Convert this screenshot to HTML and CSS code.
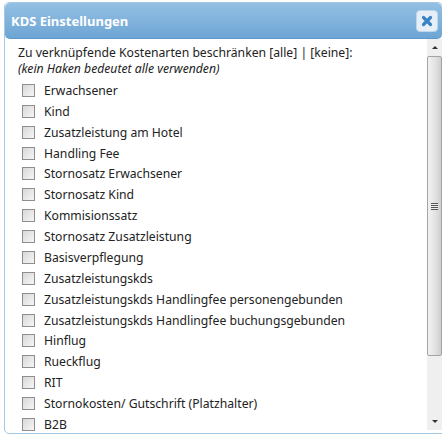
FILE: index.html
```html
<!DOCTYPE html>
<html lang="de">
<head>
<meta charset="utf-8">
<title>KDS Einstellungen</title>
<link rel="stylesheet" href="styles.css">
</head>
<body>
<div class="dialog">
  <div class="titlebar">
    <span class="title">KDS Einstellungen</span>
    <button class="close" aria-label="Schließen">
      <svg width="12" height="12" viewBox="0 0 12 12"><path d="M2.5 2.5 L9.5 9.5 M9.5 2.5 L2.5 9.5" stroke="#3b82c4" stroke-width="3.2" stroke-linecap="round"/></svg>
    </button>
  </div>
  <div class="content">
    <div class="main">
      <div class="intro">Zu verknüpfende Kostenarten beschränken [alle] | [keine]:</div>
      <div class="hint">(kein Haken bedeutet alle verwenden)</div>
      <ul class="list">
        <li><span class="cb"></span>Erwachsener</li>
        <li><span class="cb"></span>Kind</li>
        <li><span class="cb"></span>Zusatzleistung am Hotel</li>
        <li><span class="cb"></span>Handling Fee</li>
        <li><span class="cb"></span>Stornosatz Erwachsener</li>
        <li><span class="cb"></span>Stornosatz Kind</li>
        <li><span class="cb"></span>Kommisionssatz</li>
        <li><span class="cb"></span>Stornosatz Zusatzleistung</li>
        <li><span class="cb"></span>Basisverpflegung</li>
        <li><span class="cb"></span>Zusatzleistungskds</li>
        <li><span class="cb"></span>Zusatzleistungskds Handlingfee personengebunden</li>
        <li><span class="cb"></span>Zusatzleistungskds Handlingfee buchungsgebunden</li>
        <li><span class="cb"></span>Hinflug</li>
        <li><span class="cb"></span>Rueckflug</li>
        <li><span class="cb"></span>RIT</li>
        <li><span class="cb"></span>Stornokosten/ Gutschrift (Platzhalter)</li>
        <li><span class="cb"></span>B2B</li>
      </ul>
    </div>
    <div class="scrollbar">
      <div class="arrow up"></div>
      <div class="track">
        <div class="thumb"><span class="grip"></span></div>
      </div>
      <div class="arrow down"></div>
    </div>
  </div>
</div>
</body>
</html>
```
FILE: styles.css
```css
html, body {
  margin: 0;
  padding: 0;
  background: #ffffff;
}
body {
  font-family: "Noto Sans", "DejaVu Sans", sans-serif;
  font-size: 12.2px;
  color: #222222;
}
.dialog {
  margin: 2px 0 0 4px;
  width: 437px;
  height: 430px;
  border: 1px solid #a6c9e2;
  border-radius: 5px 5px 0 5px;
  display: flex;
  flex-direction: column;
  overflow: hidden;
  background: #ffffff;
}
.titlebar {
  height: 36px;
  flex: none;
  box-sizing: border-box;
  display: flex;
  align-items: center;
  justify-content: space-between;
  padding: 0 4px 0 6px;
  background: linear-gradient(#94c0e3, #6ea5d4);
  border-bottom: 1px solid #5d97cb;
  border-radius: 5px;
}
.title {
  color: #ffffff;
  font-weight: bold;
  font-size: 13px;
}
.close {
  width: 22px;
  height: 22px;
  padding: 0;
  border: 1px solid #bcd6ec;
  border-radius: 4px;
  background: #e6eff8;
  display: flex;
  align-items: center;
  justify-content: center;
}
.content {
  flex: 1;
  display: flex;
  min-height: 0;
}
.main {
  flex: 1;
  overflow: hidden;
  padding: 6px 0 0 13px;
}
.intro, .hint {
  line-height: 16px;
}
.hint {
  font-style: italic;
}
.list {
  list-style: none;
  margin: 3px 0 0;
  padding: 0;
}
.list li {
  height: 20.875px;
  display: flex;
  align-items: center;
  white-space: nowrap;
}
.cb {
  width: 11px;
  height: 11px;
  margin: 0 9px 0 4px;
  border: 1px solid #8e8e8e;
  background: linear-gradient(135deg, #d8d8d8, #f6f6f6);
  flex: none;
}
.scrollbar {
  width: 15px;
  flex: none;
  display: flex;
  flex-direction: column;
  background: #efefef;
  margin: 0 0 3px;
}
.arrow {
  height: 17px;
  flex: none;
  display: flex;
  align-items: center;
  justify-content: center;
}
.arrow.up::before {
  content: "";
  border-left: 3px solid transparent;
  border-right: 3px solid transparent;
  border-bottom: 3px solid #333;
}
.arrow.down::before {
  content: "";
  border-left: 3px solid transparent;
  border-right: 3px solid transparent;
  border-top: 3px solid #333;
}
.track {
  flex: 1;
  display: flex;
  flex-direction: column;
}
.thumb {
  height: 300px;
  box-sizing: border-box;
  border: 1px solid #a4a4a4;
  border-radius: 2px;
  background: linear-gradient(90deg, #f2f2f2, #e4e4e4 50%, #cfcfcf);
  display: flex;
  align-items: center;
  justify-content: center;
}
.grip {
  width: 7px;
  height: 7px;
  background: repeating-linear-gradient(#555 0 1px, #eee 1px 2px);
}
```
